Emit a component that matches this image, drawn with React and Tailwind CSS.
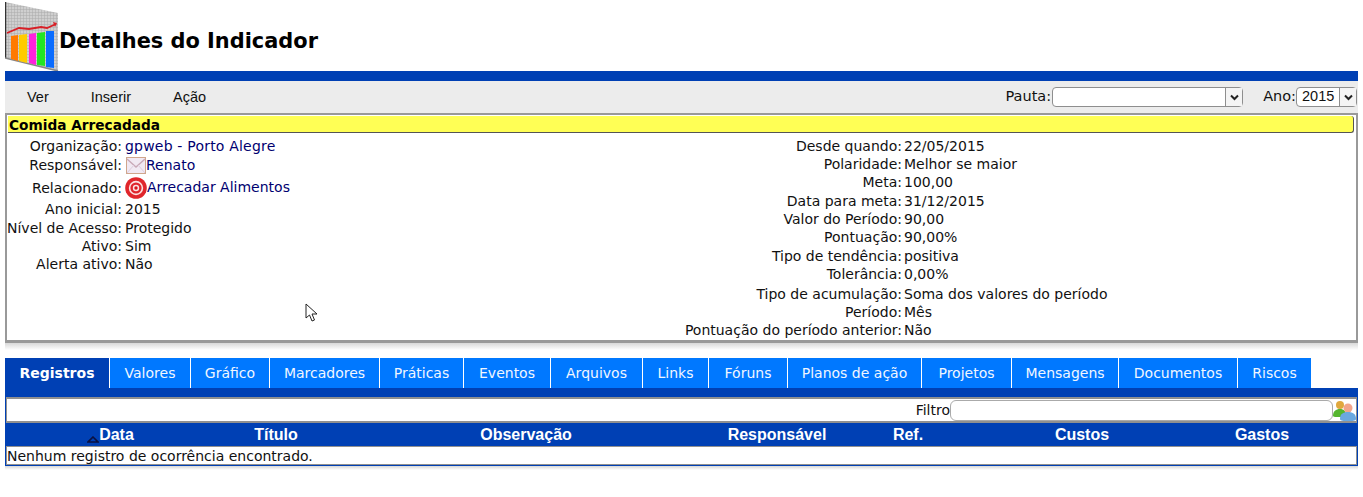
function Logo() {
  return (
    <svg width="55" height="71" viewBox="0 0 55 71" className="shrink-0">
      <defs>
        <pattern id="grade" width="3" height="3" patternUnits="userSpaceOnUse">
          <rect width="3" height="3" fill="#cfcfcf" />
          <path d="M0 0H3M0 0V3" stroke="#acacac" strokeWidth="1" />
        </pattern>
      </defs>
      <polygon points="0,2 53,13 53,71 0,58" fill="url(#grade)" />
      <path d="M0.5 2V58" stroke="#333" strokeWidth="1.5" />
      <path d="M0 58L53 71" stroke="#888" strokeWidth="1.5" />
      <polygon points="6,36 13,35 13,61 6,59" fill="#ff7a00" />
      <polygon points="14,35 22,34 22,63 14,61" fill="#ffcc00" />
      <polygon points="24,34 31,33 31,65 24,63" fill="#ff22dd" />
      <polygon points="32,33 40,32 40,66 32,65" fill="#22e622" />
      <polygon points="41,31 49,31 49,68 41,67" fill="#0a6cff" />
      <path d="M2 33L14 28L24 29L36 27L42 28L51 24" fill="none" stroke="#d81f26" strokeWidth="1.8" />
      <path d="M48 22L52 23L50 27Z" fill="#d81f26" />
    </svg>
  )
}

function Chevron() {
  return (
    <svg width="9" height="7" viewBox="0 0 9 7">
      <path d="M1 1.5L4.5 5L8 1.5" fill="none" stroke="#222" strokeWidth="2" />
    </svg>
  )
}

function Envelope() {
  return (
    <svg width="20" height="17" viewBox="0 0 20 17" className="ml-px shrink-0">
      <rect x="0.5" y="0.5" width="19" height="16" fill="#f1e9f3" stroke="#d0a68c" />
      <path d="M1 2L10 10L19 2" fill="none" stroke="#c9a9b8" strokeWidth="1.4" />
      <path d="M1 16L8 8M19 16L12 8" fill="none" stroke="#ddccdd" />
    </svg>
  )
}

function Target() {
  return (
    <svg width="22" height="22" viewBox="0 0 22 22" className="shrink-0">
      <circle cx="11" cy="11" r="10.8" fill="#e0262c" />
      <circle cx="11" cy="11" r="7.2" fill="#fbe3e3" />
      <circle cx="11" cy="11" r="5.6" fill="#e0262c" />
      <circle cx="11" cy="11" r="3.2" fill="#fbe3e3" />
      <circle cx="11" cy="11" r="1.7" fill="#d8141c" />
    </svg>
  )
}

function Users() {
  return (
    <svg width="23" height="21" viewBox="0 0 23 21" className="shrink-0 self-end">
      <circle cx="7" cy="5" r="4" fill="#e0a83e" />
      <path d="M0 16C0 11 3 9 7 9C11 9 13 11 13 16C13 17 11 17 7 17C3 17 0 17 0 16Z" fill="#55b52f" />
      <circle cx="15" cy="8" r="4.5" fill="#f2a58a" />
      <path d="M7 19C7 14 10 12 15 12C20 12 23 14 23 19C23 21 19 21 15 21C11 21 7 21 7 19Z" fill="#6aa8e0" />
    </svg>
  )
}

function Cursor() {
  return (
    <svg width="14" height="20" viewBox="0 0 14 20" className="absolute left-[305px] top-[303px]">
      <path d="M1 1V15L4.5 12L7 18L9.5 17L7 11H12Z" fill="#fff" stroke="#222" strokeWidth="1" />
    </svg>
  )
}

function Linha({ rotulo, altura, children }) {
  return (
    <div className={`flex items-center ${altura}`}>
      <div className="w-[115px] shrink-0 whitespace-nowrap text-right">{rotulo}:</div>
      <div className="ml-[3px] flex items-center whitespace-nowrap">{children}</div>
    </div>
  )
}

function LinhaDireita({ rotulo, altura, children }) {
  return (
    <div className={`flex items-center ${altura}`}>
      <div className="w-[222px] shrink-0 whitespace-nowrap text-right">{rotulo}:</div>
      <div className="ml-[2px] whitespace-nowrap">{children}</div>
    </div>
  )
}

const abas = [
  { nome: 'Registros', largura: 'w-[105px]' },
  { nome: 'Valores', largura: 'w-[81px]' },
  { nome: 'Gráfico', largura: 'w-[79px]' },
  { nome: 'Marcadores', largura: 'w-[110px]' },
  { nome: 'Práticas', largura: 'w-[84px]' },
  { nome: 'Eventos', largura: 'w-[87px]' },
  { nome: 'Arquivos', largura: 'w-[92px]' },
  { nome: 'Links', largura: 'w-[66px]' },
  { nome: 'Fóruns', largura: 'w-[79px]' },
  { nome: 'Planos de ação', largura: 'w-[134px]' },
  { nome: 'Projetos', largura: 'w-[90px]' },
  { nome: 'Mensagens', largura: 'w-[107px]' },
  { nome: 'Documentos', largura: 'w-[119px]' },
  { nome: 'Riscos', largura: 'w-[74px]' },
]

const colunas = ['Data', 'Título', 'Observação', 'Responsável', 'Ref.', 'Custos', 'Gastos']

export default function App() {
  return (
    <div className="relative h-[497px] w-[1363px] overflow-hidden bg-white px-[5px] font-['DejaVu_Sans',sans-serif] text-[14px] text-[#111]">
      <header className="flex h-[71px]">
        <Logo />
        <h1 className="mt-[27px] -ml-px whitespace-nowrap text-[20.9px] leading-[28px] font-bold text-black">Detalhes do Indicador</h1>
      </header>

      <div className="w-[1353px]">
        <div className="h-[10px] bg-[#0040b4]" />

        <nav className="flex h-[32px] items-center bg-[#ececec] text-[14.5px]">
          <span className="mt-px ml-[22px] font-['Liberation_Sans',sans-serif]">Ver</span>
          <span className="mt-px ml-[42px] font-['Liberation_Sans',sans-serif]">Inserir</span>
          <span className="mt-px ml-[42px] font-['Liberation_Sans',sans-serif]">Ação</span>
          <span className="mr-px ml-auto">Pauta:</span>
          <div className="flex h-[20px] w-[191px] items-center justify-end rounded-[4px] border border-[#8e8e8e] bg-white">
            <div className="flex h-full w-[17px] items-center justify-center border-l border-[#8e8e8e] bg-[#f4f4f4]">
              <Chevron />
            </div>
          </div>
          <span className="ml-[20px]">Ano:</span>
          <div className="mr-[1px] flex h-[20px] w-[61px] items-center justify-between rounded-[4px] border border-[#8e8e8e] bg-white pl-[5px] font-['Liberation_Sans',sans-serif]">
            <span>2015</span>
            <div className="flex h-full w-[17px] items-center justify-center border-l border-[#8e8e8e] bg-[#f4f4f4]">
              <Chevron />
            </div>
          </div>
        </nav>

        <section className="h-[230px] border-x-2 border-t-2 border-b-[3px] border-[#999] bg-white pt-px">
          <div className="mr-[2px] ml-px flex h-[17px] items-center rounded-r-[3px] border-r border-b border-[#555] bg-[#ffff55] pt-[2px] pl-[1px] text-[13.7px] font-bold text-black">
            Comida Arrecadada
          </div>
          <div className="flex">
            <div className="w-[674px] shrink-0">
              <Linha rotulo="Organização" altura="h-[19px] mt-[4px]"><span className="tracking-[0.2px] text-[#000070]">gpweb - Porto Alegre</span></Linha>
              <Linha rotulo="Responsável" altura="h-[19px]">
                <Envelope />
                <span className="text-[#000070]">Renato</span>
              </Linha>
              <Linha rotulo="Relacionado" altura="h-[26px]">
                <Target />
                <span className="-mt-[2px] text-[#000070]">Arrecadar Alimentos</span>
              </Linha>
              <Linha rotulo="Ano inicial" altura="h-[17px]">2015</Linha>
              <Linha rotulo="Nível de Acesso" altura="h-[18px] mt-px">Protegido</Linha>
              <Linha rotulo="Ativo" altura="h-[18px]">Sim</Linha>
              <Linha rotulo="Alerta ativo" altura="h-[18px]">Não</Linha>
            </div>
            <div className="-ml-px">
              <LinhaDireita rotulo="Desde quando" altura="h-[18px] mt-[4px]">22/05/2015</LinhaDireita>
              <LinhaDireita rotulo="Polaridade" altura="h-[18px]">Melhor se maior</LinhaDireita>
              <LinhaDireita rotulo="Meta" altura="h-[19px]">100,00</LinhaDireita>
              <LinhaDireita rotulo="Data para meta" altura="h-[18px]">31/12/2015</LinhaDireita>
              <LinhaDireita rotulo="Valor do Período" altura="h-[18px]">90,00</LinhaDireita>
              <LinhaDireita rotulo="Pontuação" altura="h-[19px]">90,00%</LinhaDireita>
              <LinhaDireita rotulo="Tipo de tendência" altura="h-[18px]">positiva</LinhaDireita>
              <LinhaDireita rotulo="Tolerância" altura="h-[18px]">0,00%</LinhaDireita>
              <LinhaDireita rotulo="Tipo de acumulação" altura="h-[17px] mt-[3px]">Soma dos valores do período</LinhaDireita>
              <LinhaDireita rotulo="Período" altura="h-[18px]">Mês</LinhaDireita>
              <LinhaDireita rotulo="Pontuação do período anterior" altura="h-[18px]">Não</LinhaDireita>
            </div>
          </div>
        </section>
        <div className="h-[7px] bg-gradient-to-b from-[#d8d8d8] to-white" />

        <div className="mt-[8px] flex h-[30px]">
          {abas.map((aba, i) => (
            <div
              key={aba.nome}
              className={`flex items-center justify-center border-r border-white ${aba.largura} ${i === 0 ? 'bg-[#0040b4] font-bold text-white' : 'bg-[#0078ff] text-[#f0f6ff]'}`}
            >
              {aba.nome}
            </div>
          ))}
        </div>

        <div className="bg-[#0040b4] px-px pt-[9px] pb-px">
          <div className="flex h-[26px] items-center justify-end border-x border-y-2 border-[#909090] bg-white">
            <span>Filtro</span>
            <div className="h-[21px] w-[383px] self-end rounded-[6px] border border-[#aaa] bg-white" />
            <Users />
          </div>
          <div className="grid h-[23px] grid-cols-[209px_122px_378px_124px_138px_210px_150px_20px] items-center font-['Liberation_Sans',sans-serif] text-[16px] font-bold text-white">
            {colunas.map((coluna, i) => (
              <div key={coluna} className="flex items-center justify-center">
                {i === 0 && (
                  <svg width="12" height="7" viewBox="0 0 12 7" className="mt-[8px]">
                    <path d="M6 1L11 6H1Z" fill="none" stroke="#0b1140" strokeWidth="1.6" />
                  </svg>
                )}
                {coluna}
              </div>
            ))}
          </div>
          <div className="flex h-[19px] items-center border border-[#909090] bg-white pt-px">Nenhum registro de ocorrência encontrado.</div>
        </div>
        <div className="h-[4px] bg-gradient-to-b from-[#d8d8d8] to-white" />
      </div>
      <Cursor />
    </div>
  )
}
